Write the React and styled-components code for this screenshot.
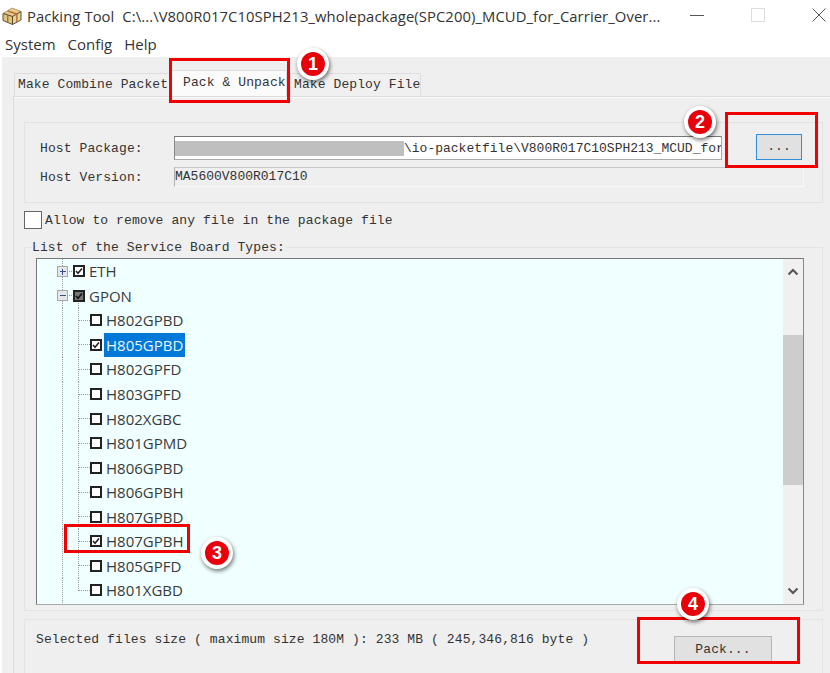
import React from "react";
import styled, { createGlobalStyle } from "styled-components";

const GlobalStyle = createGlobalStyle`
  html, body {
    margin: 0;
    padding: 0;
    background: #fff;
  }
`;

const uiFont = `"Open Sans", "Noto Sans", sans-serif`;
const monoFont = `"Liberation Mono", monospace`;

const boards = [
  { name: "H802GPBD" },
  { name: "H805GPBD", checked: true, selected: true },
  { name: "H802GPFD" },
  { name: "H803GPFD" },
  { name: "H802XGBC" },
  { name: "H801GPMD" },
  { name: "H806GPBD" },
  { name: "H806GPBH" },
  { name: "H807GPBD" },
  { name: "H807GPBH", checked: true },
  { name: "H805GPFD" },
  { name: "H801XGBD", last: true },
];

const PackageIcon = () => (
  <svg width="20" height="20" viewBox="0 0 20 20">
    <path d="M1 7.5L10 2l9 3.5-8.500 5z" fill="#e8c88c" stroke="#a98c55" strokeWidth="0.8" />
    <path d="M1 7.500l9.500 3v8L1 14.500z" fill="#dcc481" stroke="#4f4126" strokeWidth="0.9" />
    <path d="M10.500 10.500l8.500-5v8.500l-8.500 4.500z" fill="#e6d39c" stroke="#4f4126" strokeWidth="0.9" />
    <path d="M5.500 4.800l9 3.200M5.700 9v7.500M14.800 8v8" fill="none" stroke="#b0702e" strokeWidth="1.400" />
  </svg>
);

const ChevronUp = () => (
  <svg width="12" height="8" viewBox="0 0 12 8">
    <path d="M1.500 6.500L6 2l4.500 4.500" fill="none" stroke="#555" strokeWidth="2" />
  </svg>
);

const ChevronDown = () => (
  <svg width="12" height="8" viewBox="0 0 12 8">
    <path d="M1.500 1.500L6 6l4.500-4.500" fill="none" stroke="#555" strokeWidth="2" />
  </svg>
);

const TopGuides = ({ open }) => (
  <GuideSvg $width={36}>
    <path
      d="M25.500 0V25M25.500 12.500H36"
      fill="none"
      stroke="#999"
      strokeDasharray="1 1"
      shapeRendering="crispEdges"
    />
    <rect x="20.500" y="7.500" width="10" height="10" fill="#e4e6ea" stroke="#a8a8a8" shapeRendering="crispEdges" />
    <path d={open ? "M22.500 12.500h6" : "M22.500 12.500h6M25.500 9.500v6"} stroke="#3a4f90" fill="none" shapeRendering="crispEdges" />
    {open && (
      <path d="M41.500 20V25" stroke="#999" strokeDasharray="1 1" shapeRendering="crispEdges" />
    )}
  </GuideSvg>
);

const ChildGuides = ({ last }) => (
  <GuideSvg $width={53}>
    <path
      d={`M25.500 0V25M41.500 0V${last ? 13 : 25}M41.500 12.500H53`}
      fill="none"
      stroke="#999"
      strokeDasharray="1 1"
      shapeRendering="crispEdges"
    />
  </GuideSvg>
);

const Check = ({ checked, mixed }) => (
  <CheckBox $mixed={mixed}>
    {checked && (
      <svg width="8" height="8" viewBox="0 0 8 8">
        <path d="M1 4l2 2.200L7 1.500" fill="none" stroke={mixed ? "#111" : "#222"} strokeWidth="1.600" />
      </svg>
    )}
  </CheckBox>
);

const App = () => {
  return (
    <Page>
      <GlobalStyle />
      <TitleBar>
        <PackageIcon />
        <TitleText>{"Packing Tool  C:\\...\\V800R017C10SPH213_wholepackage(SPC200)_MCUD_for_Carrier_Over..."}</TitleText>
        <WindowControls>
          <svg width="14" height="14" viewBox="0 0 14 14">
            <path d="M0 7.500h14" stroke="#555" />
          </svg>
          <svg width="14" height="14" viewBox="0 0 14 14">
            <rect x="0.500" y="0.500" width="13" height="13" fill="none" stroke="#ddd" />
          </svg>
          <svg width="14" height="14" viewBox="0 0 14 14">
            <path d="M0.500 0.500l13 13M13.500 0.500l-13 13" stroke="#555" />
          </svg>
        </WindowControls>
      </TitleBar>

      <MenuBar>
        <MenuItem>System</MenuItem>
        <MenuItem>Config</MenuItem>
        <MenuItem>Help</MenuItem>
      </MenuBar>

      <Body>
        <TabRow>
          <Tab $width={157}>Make Combine Packet</Tab>
          <Tab $width={116} $active>Pack &amp; Unpack</Tab>
          <Tab $width={131}>Make Deploy File</Tab>
        </TabRow>

        <Pane>
          <HostGroup>
            <HostRow>
              <HostLabel>Host Package:</HostLabel>
              <PathInput>
                <Redacted />
                <PathText>\io-packetfile\V800R017C10SPH213_MCUD_for</PathText>
              </PathInput>
              <BrowseButton>...</BrowseButton>
            </HostRow>
            <VersionRow>
              <HostLabel>Host Version:</HostLabel>
              <VersionValue>MA5600V800R017C10</VersionValue>
            </VersionRow>
          </HostGroup>

          <AllowRow>
            <AllowBox />
            <span>Allow to remove any file in the package file</span>
          </AllowRow>

          <ListGroup>
            <Legend>List of the Service Board Types:</Legend>
            <Tree>
              <TreeRows>
                <TreeRow>
                  <TopGuides />
                  <Check checked />
                  <TreeLabel>ETH</TreeLabel>
                </TreeRow>
                <TreeRow>
                  <TopGuides open />
                  <Check checked mixed />
                  <TreeLabel>GPON</TreeLabel>
                </TreeRow>
                {boards.map((board) => (
                  <TreeRow key={board.name}>
                    <ChildGuides last={board.last} />
                    <Check checked={board.checked} />
                    <TreeLabel $selected={board.selected}>{board.name}</TreeLabel>
                  </TreeRow>
                ))}
              </TreeRows>
              <ScrollBar>
                <ScrollArrow>
                  <ChevronUp />
                </ScrollArrow>
                <ScrollThumb />
                <ScrollArrow $bottom>
                  <ChevronDown />
                </ScrollArrow>
              </ScrollBar>
            </Tree>
          </ListGroup>

          <BottomGroup>
            <span>Selected files size ( maximum size 180M ): 233 MB ( 245,346,816 byte )</span>
            <PackButton>Pack...</PackButton>
          </BottomGroup>
        </Pane>
      </Body>

      <Frame $left={169} $top={58} $width={121} $height={45} />
      <Frame $left={725} $top={112} $width={93} $height={56} />
      <Frame $left={64} $top={524} $width={126} $height={29} />
      <Frame $left={637} $top={617} $width={163} $height={47} />

      <Badge $left={313} $top={64}>1</Badge>
      <Badge $left={700} $top={122}>2</Badge>
      <Badge $left={217} $top={553}>3</Badge>
      <Badge $left={693} $top={604}>4</Badge>
    </Page>
  );
};

const Page = styled.div`
  position: relative;
  width: 830px;
  height: 673px;
  overflow: hidden;
  background: #fff;
  color: #333;
  font-family: ${monoFont};
  font-size: 13px;
  letter-spacing: 0.1px;
`;

const TitleBar = styled.div`
  display: flex;
  align-items: center;
  gap: 5px;
  height: 31px;
  padding: 0 4px 0 2px;
  box-sizing: border-box;
`;

const TitleText = styled.span`
  font-family: ${uiFont};
  font-size: 14.8px;
  letter-spacing: 0.09px;
  color: #333;
  white-space: pre;
`;

const WindowControls = styled.div`
  display: flex;
  align-items: center;
  gap: 47px;
  margin-left: auto;
  padding-bottom: 1px;
`;

const MenuBar = styled.div`
  display: flex;
  align-items: center;
  gap: 12px;
  height: 26px;
  padding-left: 5px;
  box-sizing: border-box;
`;

const MenuItem = styled.span`
  font-family: ${uiFont};
  font-size: 15px;
  letter-spacing: 0;
  color: #333;
`;

const Body = styled.div`
  margin-left: 2px;
  height: 616px;
  padding-top: 13px;
  box-sizing: border-box;
  background: #efefef;
`;

const TabRow = styled.div`
  display: flex;
  align-items: flex-end;
  height: 26px;
  padding-left: 12px;
`;

const Tab = styled.div`
  width: ${(p) => p.$width}px;
  height: ${(p) => (p.$active ? 26 : 23)}px;
  box-sizing: border-box;
  background: ${(p) => (p.$active ? "#fbfbfb" : "#f0f0f0")};
  border: 1px solid #dedede;
  border-bottom: none;
  padding-left: ${(p) => (p.$active ? 11 : 3)}px;
  line-height: ${(p) => (p.$active ? 24 : 22)}px;
  white-space: nowrap;
  overflow: hidden;
  margin-right: ${(p) => (p.$active ? 3 : 0)}px;
`;

const Pane = styled.div`
  height: 577px;
  margin-left: 11px;
  padding: 25px 7px 0 10px;
  box-sizing: border-box;
  border-top: 1px solid #dcdcdc;
  border-left: 1px solid #dcdcdc;
  box-shadow: inset 0 1px 0 #fafafa;
`;

const HostGroup = styled.div`
  height: 81px;
  padding: 13px 0 0 15px;
  box-sizing: border-box;
  border: 1px solid #e2e2e2;
`;

const HostRow = styled.div`
  display: flex;
  align-items: center;
  height: 24px;
`;

const VersionRow = styled(HostRow)`
  height: 20px;
  margin-top: 7px;
`;

const HostLabel = styled.span`
  width: 134px;
  flex: none;
`;

const PathInput = styled.div`
  display: flex;
  align-items: center;
  width: 548px;
  height: 24px;
  flex: none;
  box-sizing: border-box;
  background: #fff;
  border: 1px solid #aaa;
  border-top-color: #777;
  border-left-color: #888;
  overflow: hidden;
  white-space: nowrap;
  letter-spacing: 0;
`;

const Redacted = styled.div`
  width: 229px;
  height: 15px;
  flex: none;
  background: #bfbfbf;
`;

const PathText = styled.span`
  flex: none;
`;

const BrowseButton = styled.div`
  width: 46px;
  height: 26px;
  flex: none;
  margin: -3px 0 0 34px;
  box-sizing: border-box;
  border: 1px solid #2f8fdc;
  background: #e1e1e1;
  text-align: center;
  line-height: 24px;
`;

const VersionValue = styled.div`
  width: 630px;
  height: 20px;
  flex: none;
  box-sizing: border-box;
  border: 1px solid #f8f8f8;
  border-top-color: #c8c8c8;
  border-left-color: #b0b0b0;
  line-height: 18px;
  letter-spacing: 0;
`;

const AllowRow = styled.div`
  display: flex;
  align-items: center;
  gap: 3px;
  height: 18px;
  margin-top: 8px;
`;

const AllowBox = styled.div`
  width: 18px;
  height: 18px;
  box-sizing: border-box;
  background: #fff;
  border: 1px solid #666;
`;

const ListGroup = styled.div`
  position: relative;
  height: 364px;
  margin-top: 18px;
  padding: 10px 18px 0 11px;
  box-sizing: border-box;
  border: 1px solid #e4e4e4;
`;

const Legend = styled.span`
  position: absolute;
  left: 6px;
  top: -8px;
  padding: 0 1px;
  background: #efefef;
  line-height: 15px;
`;

const Tree = styled.div`
  display: flex;
  height: 347px;
  box-sizing: border-box;
  background: #f0ffff;
  border: 1px solid #777;
  border-bottom-color: #aaa;
  border-right-color: #888;
`;

const TreeRows = styled.div`
  flex: 1;
  min-width: 0;
  overflow: hidden;
`;

const TreeRow = styled.div`
  display: flex;
  align-items: center;
  height: 24.55px;
`;

const GuideSvg = styled.svg`
  width: ${(p) => p.$width}px;
  height: 25px;
  flex: none;
  overflow: visible;
`;

const CheckBox = styled.span`
  display: flex;
  align-items: center;
  justify-content: center;
  width: 12px;
  height: 12px;
  flex: none;
  box-sizing: border-box;
  background: ${(p) => (p.$mixed ? "#777" : "#fff")};
  border: 2px solid #222;
`;

const TreeLabel = styled.span`
  margin-left: 2px;
  padding: 0 2px;
  height: 24px;
  line-height: 24px;
  font-family: ${uiFont};
  font-size: 15px;
  letter-spacing: 0;
  color: ${(p) => (p.$selected ? "#eaf4ff" : "#3a3a3a")};
  background: ${(p) => (p.$selected ? "#0078d7" : "transparent")};
`;

const ScrollBar = styled.div`
  display: flex;
  flex-direction: column;
  width: 20px;
  flex: none;
  background: #f0f0f0;
`;

const ScrollArrow = styled.div`
  display: flex;
  align-items: center;
  justify-content: center;
  height: 26px;
  flex: none;
  margin-top: ${(p) => (p.$bottom ? "auto" : "0")};
`;

const ScrollThumb = styled.div`
  height: 150px;
  flex: none;
  margin-top: 50px;
  background: #cdcdcd;
`;

const BottomGroup = styled.div`
  display: flex;
  align-items: flex-start;
  justify-content: space-between;
  height: 60px;
  margin-top: 8px;
  padding: 12px 50px 0 11px;
  box-sizing: border-box;
  border: 1px solid #e4e4e4;
`;

const PackButton = styled.div`
  width: 98px;
  height: 28px;
  margin-top: 4px;
  box-sizing: border-box;
  border: 1px solid #b5b5b5;
  background: #e1e1e1;
  text-align: center;
  line-height: 26px;
`;

const Frame = styled.div`
  position: absolute;
  left: ${(p) => p.$left}px;
  top: ${(p) => p.$top}px;
  width: ${(p) => p.$width}px;
  height: ${(p) => p.$height}px;
  box-sizing: border-box;
  border: 3px solid #f00000;
`;

const Badge = styled.div`
  position: absolute;
  left: ${(p) => p.$left - 16}px;
  top: ${(p) => p.$top - 16}px;
  width: 32px;
  height: 32px;
  box-sizing: border-box;
  display: flex;
  align-items: center;
  justify-content: center;
  border-radius: 50%;
  border: 4px solid #fff;
  background: #e8000b;
  box-shadow: 1px 2px 4px rgba(0, 0, 0, 0.55);
  color: #fff;
  font-family: "Liberation Sans", sans-serif;
  font-size: 18px;
  font-weight: 700;
`;

export default App;
